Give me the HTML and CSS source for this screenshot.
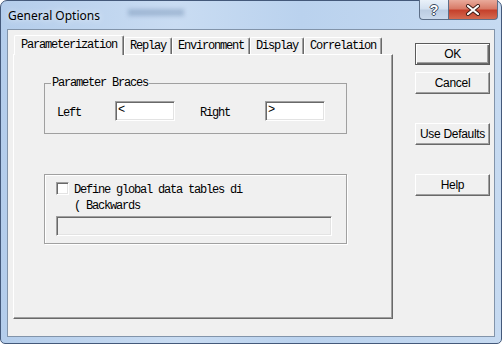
FILE: index.html
```html
<html>
  <head>
    <title>General Options</title>
    <meta name="viewport" content="width=device-width, initial-scale=1.0">
    <link rel="stylesheet" href="styles.css">
  </head>

  <body>
    <div class="window">
      <div class="titlebar">
        <span class="title">General Options</span>
        <span class="ghost"></span>
        <div class="caption">
          <div class="cap-btn cap-help">?</div>
          <div class="cap-btn cap-close">
            <svg width="16" height="12" viewBox="0 0 16 12">
              <path d="M3 2 L13 10 M13 2 L3 10" stroke="#3b1a14" stroke-width="4" stroke-linecap="round"/>
              <path d="M3 2 L13 10 M13 2 L3 10" stroke="#fff" stroke-width="2.2" stroke-linecap="round"/>
            </svg>
          </div>
        </div>
      </div>

      <div class="client">
        <div class="tabctl">
          <div class="tabs">
            <div class="tab active">Parameterization</div>
            <div class="tab">Replay</div>
            <div class="tab">Environment</div>
            <div class="tab">Display</div>
            <div class="tab">Correlation</div>
          </div>
          <div class="panel">
            <fieldset class="group braces">
              <legend>Parameter Braces</legend>
              <div class="brace-row">
                <span class="lbl">Left</span>
                <div class="edit brace">&lt;</div>
                <span class="lbl lbl-right">Right</span>
                <div class="edit brace">&gt;</div>
              </div>
            </fieldset>

            <div class="group tables">
              <div class="check-row">
                <span class="checkbox"></span>
                <span class="check-text">Define global data tables di<br>( Backwards</span>
              </div>
              <div class="edit disabled"></div>
            </div>
          </div>
        </div>

        <div class="buttons">
          <button class="btn default">OK</button>
          <button class="btn">Cancel</button>
          <button class="btn spaced">Use Defaults</button>
          <button class="btn spaced">Help</button>
        </div>
      </div>
    </div>
  </body>
</html>
```

FILE: styles.css
```css
*{
  margin: 0px;
}

body{
  width: 502px;
  height: 344px;
  overflow: hidden;
  background-color: #ffffff;
}

.window{
  box-sizing: border-box;
  width: 502px;
  height: 344px;
  display: flex;
  flex-direction: column;
  border: 1px solid #44597a;
  border-radius: 7px 7px 5px 5px;
  background: linear-gradient(90deg, #b4cdeb 0%, #c9dcf2 35%, #bad2ee 60%, #c6daf1 100%);
}

/* title bar */
.titlebar{
  height: 28px;
  display: flex;
  align-items: center;
  padding: 0 3px 0 7px;
}

.title{
  font-family: "Noto Sans", sans-serif;
  font-size: 12px;
  color: #000000;
  text-shadow: 0 0 6px rgba(255, 255, 255, 0.9);
}

.ghost{
  width: 56px;
  height: 7px;
  margin-left: 28px;
  margin-bottom: 6px;
  background-color: rgba(90, 120, 160, 0.35);
  filter: blur(2px);
}

.caption{
  display: flex;
  margin-left: auto;
  align-self: flex-start;
  margin-top: -1px;
}

.cap-btn{
  box-sizing: border-box;
  height: 20px;
  display: flex;
  align-items: center;
  justify-content: center;
  border: 1px solid #5d6f88;
  border-top: none;
}

.cap-help{
  width: 29px;
  border-right: none;
  border-radius: 0 0 0 4px;
  background: linear-gradient(180deg, #eaf1f9 0%, #d4e1f0 45%, #bccde2 55%, #c9d9ec 100%);
  font-family: "Liberation Sans", sans-serif;
  font-weight: bold;
  font-size: 14px;
  color: #ffffff;
  text-shadow: 1px 0 0 #3d4c60, -1px 0 0 #3d4c60, 0 1px 0 #3d4c60, 0 -1px 0 #3d4c60;
}

.cap-close{
  width: 50px;
  border-radius: 0 0 4px 0;
  background: linear-gradient(180deg, #e9aa9b 0%, #d87b68 45%, #c5412c 55%, #d46a50 100%);
}

/* client area */
.client{
  flex: 1;
  display: flex;
  align-items: flex-start;
  margin: 0 6px 6px 6px;
  padding: 5px 0 0 5px;
  border: 1px solid #8294aa;
  background-color: #f0f0f0;
  font-family: "Liberation Mono", monospace;
  font-size: 12px;
  letter-spacing: -1.2px;
  color: #000000;
}

.tabctl{
  width: 380px;
  display: flex;
  flex-direction: column;
}

.tabs{
  height: 19px;
  display: flex;
  align-items: flex-end;
  padding-left: 1px;
}

.tab{
  box-sizing: border-box;
  height: 17px;
  padding: 0 5px;
  line-height: 17px;
  white-space: nowrap;
  border-top: 1px solid #ffffff;
  border-left: 1px solid #ffffff;
  border-right: 1px solid #696969;
  border-radius: 2px 2px 0 0;
  box-shadow: inset -1px 0 0 #a0a0a0;
  background-color: #f0f0f0;
}

.tab.active{
  height: 20px;
  padding: 0 6px;
  line-height: 18px;
  margin-bottom: -1px;
  position: relative;
  z-index: 1;
}

.panel{
  box-sizing: border-box;
  height: 265px;
  border-top: 1px solid #ffffff;
  border-left: 1px solid #ffffff;
  border-right: 1px solid #696969;
  border-bottom: 1px solid #696969;
  box-shadow: inset -1px -1px 0 #a0a0a0;
}

/* group boxes */
.group{
  box-sizing: border-box;
  width: 303px;
  margin: 0 0 0 30px;
  border: 1px solid #a0a0a0;
  min-inline-size: 0;
}

.braces{
  margin-top: 21px;
  padding: 11px 6px 12px 6px;
}

.braces legend{
  padding: 0 1px;
  line-height: 14px;
}

.brace-row{
  display: flex;
  align-items: center;
  padding-left: 6px;
}

.lbl{
  width: 58px;
  padding-top: 3px;
}

.lbl-right{
  width: 65px;
  margin-left: 25px;
}

.edit{
  box-sizing: border-box;
  height: 20px;
  padding-left: 2px;
  line-height: 17px;
  border-top: 1px solid #a0a0a0;
  border-left: 1px solid #a0a0a0;
  border-right: 1px solid #ffffff;
  border-bottom: 1px solid #ffffff;
  box-shadow: inset 1px 1px 0 #696969, inset -1px -1px 0 #e3e3e3;
  background-color: #ffffff;
}

.brace{
  width: 60px;
}

.tables{
  margin-top: 40px;
  padding: 7px 11px 7px 11px;
  box-shadow: 1px 1px 0 #ffffff, inset 1px 1px 0 #ffffff;
}

.check-row{
  display: flex;
  align-items: flex-start;
  gap: 5px;
}

.checkbox{
  box-sizing: border-box;
  width: 13px;
  height: 13px;
  border-top: 1px solid #a0a0a0;
  border-left: 1px solid #a0a0a0;
  border-right: 1px solid #ffffff;
  border-bottom: 1px solid #ffffff;
  box-shadow: inset 1px 1px 0 #696969, inset -1px -1px 0 #e3e3e3;
  background-color: #ffffff;
}

.check-text{
  line-height: 16px;
}

.edit.disabled{
  width: 276px;
  margin-top: 2px;
  background-color: #f0f0f0;
}

/* push buttons */
.buttons{
  display: flex;
  flex-direction: column;
  margin-left: 22px;
  padding-top: 8px;
}

.btn{
  box-sizing: border-box;
  width: 75px;
  height: 22px;
  padding: 0;
  font-family: "Liberation Sans", sans-serif;
  font-size: 12px;
  letter-spacing: -0.3px;
  color: #000000;
  background-color: #f0f0f0;
  border-top: 1px solid #ffffff;
  border-left: 1px solid #ffffff;
  border-right: 1px solid #696969;
  border-bottom: 1px solid #696969;
  box-shadow: inset -1px -1px 0 #a0a0a0;
}

.btn + .btn{
  margin-top: 7px;
}

.btn.spaced{
  margin-top: 29px;
}

.btn.default{
  border: 1px solid #5a5a5a;
  box-shadow: inset 1px 1px 0 #ffffff, inset -1px -1px 0 #696969, inset -2px -2px 0 #a0a0a0;
}
```
